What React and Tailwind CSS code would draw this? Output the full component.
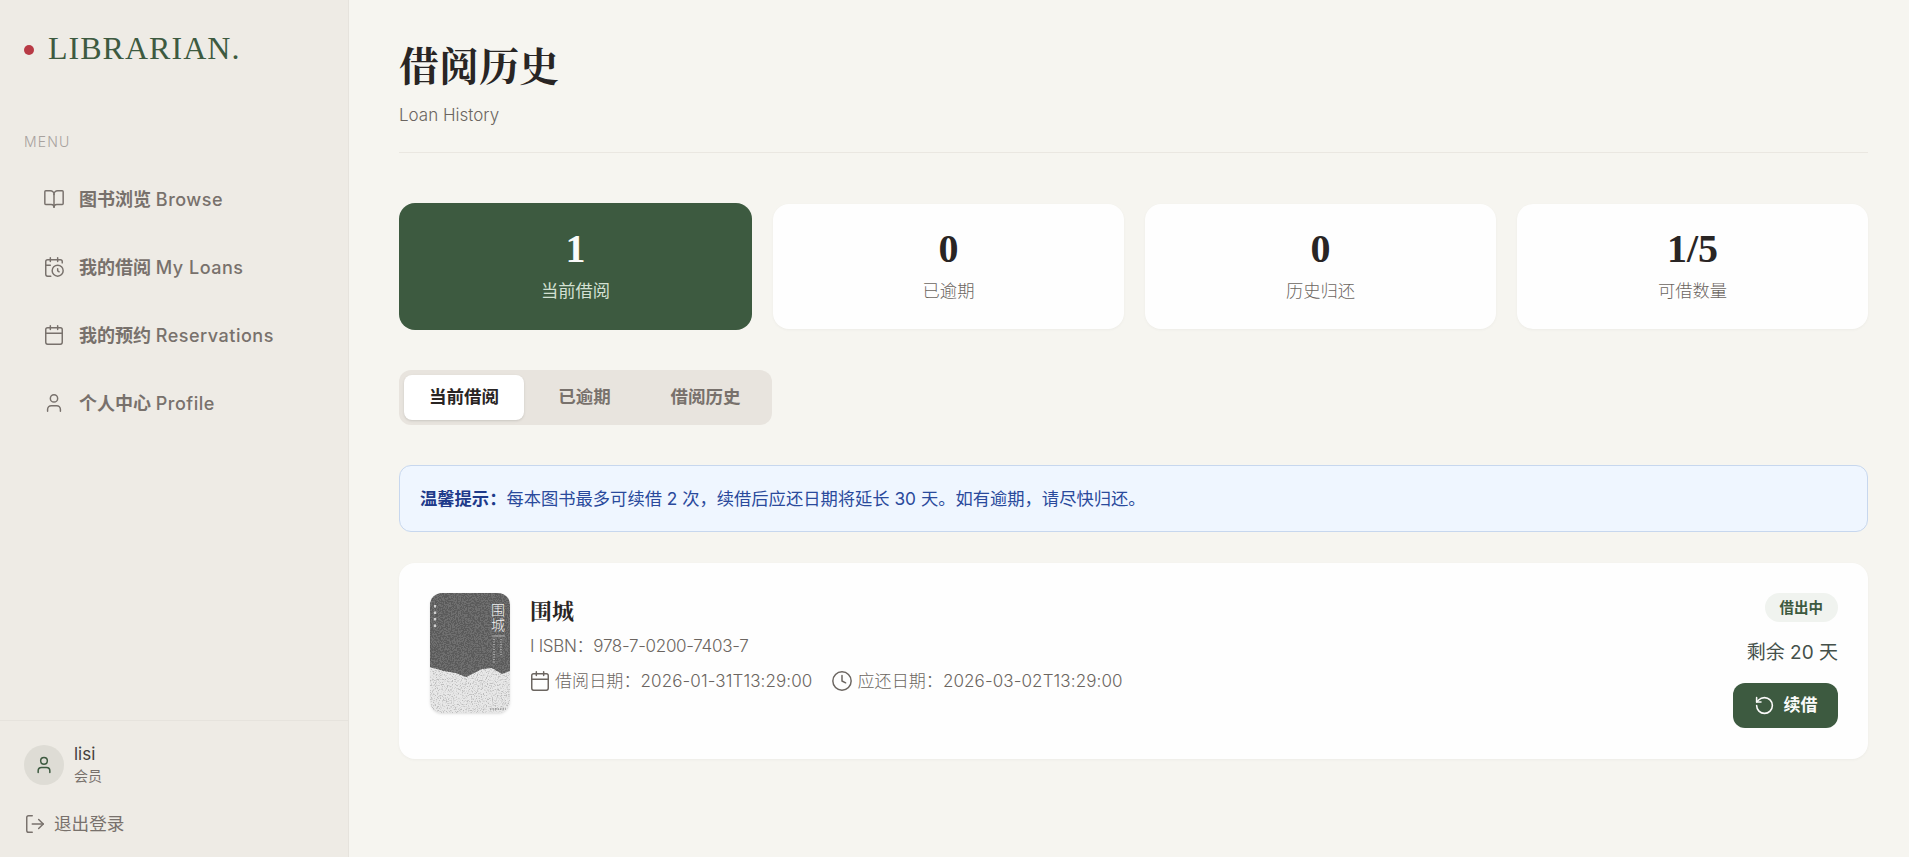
import { BookOpen, CalendarClock, Calendar, User, LogOut, Clock, RotateCcw } from 'lucide-react'

const sans = "font-['Inter','Noto_Sans_CJK_SC',sans-serif]"
const serif = "font-['Liberation_Serif','Noto_Serif_CJK_SC','Noto_Sans_CJK_SC',serif]"

const navItems = [
  { icon: BookOpen, zh: '图书浏览', en: 'Browse' },
  { icon: CalendarClock, zh: '我的借阅', en: 'My Loans' },
  { icon: Calendar, zh: '我的预约', en: 'Reservations' },
  { icon: User, zh: '个人中心', en: 'Profile' },
]

const stats = [
  { value: '0', label: '已逾期' },
  { value: '0', label: '历史归还' },
  { value: '1/5', label: '可借数量' },
]

function BookCover() {
  return (
    <svg width="80" height="120" viewBox="0 0 80 120" className="rounded-xl shadow-sm shrink-0">
      <defs>
        <filter id="grainDark" x="0" y="0" width="100%" height="100%">
          <feTurbulence type="fractalNoise" baseFrequency="0.7" numOctaves="3" seed="4" />
          <feColorMatrix values="0 0 0 0 0.1  0 0 0 0 0.1  0 0 0 0 0.1  7 0 0 0 -3" />
          <feComposite in2="SourceGraphic" operator="in" />
          <feMerge>
            <feMergeNode in="SourceGraphic" />
            <feMergeNode />
          </feMerge>
        </filter>
        <filter id="grainLight" x="0" y="0" width="100%" height="100%">
          <feTurbulence type="fractalNoise" baseFrequency="0.8" numOctaves="2" seed="9" />
          <feColorMatrix values="0 0 0 0 0.5  0 0 0 0 0.5  0 0 0 0 0.5  4 0 0 0 -1.9" />
          <feComposite in2="SourceGraphic" operator="in" />
          <feMerge>
            <feMergeNode in="SourceGraphic" />
            <feMergeNode />
          </feMerge>
        </filter>
      </defs>
      <rect width="80" height="120" fill="#e8e8e8" filter="url(#grainLight)" />
      <path
        d="M0 0H80V78L72 81L62 75L52 76L44 80L36 84L26 80L14 78L0 74Z"
        fill="#707070"
        filter="url(#grainDark)"
      />
      <text x="68" y="22" fontSize="14" fill="#f2f2f2" textAnchor="middle" fontFamily="'Noto Sans CJK SC', sans-serif" fontWeight="300">围</text>
      <text x="68" y="37" fontSize="14" fill="#f2f2f2" textAnchor="middle" fontFamily="'Noto Sans CJK SC', sans-serif" fontWeight="300">城</text>
      <path d="M62 43H75" stroke="#e8e8e8" strokeWidth="0.6" />
      <path d="M64 46V70M71 46V62" stroke="#c8c8c8" strokeWidth="1.2" strokeDasharray="1 1.5" />
      <path d="M5 12V36" stroke="#d0d0d0" strokeWidth="2.2" strokeDasharray="2.5 4" />
      <path d="M60 116H76" stroke="#777777" strokeWidth="1" strokeDasharray="1.5 1" />
    </svg>
  )
}

function Sidebar() {
  return (
    <aside className="w-[349px] shrink-0 flex flex-col bg-[#eeebe5] border-r border-[#e6e3dd]">
      <div className="flex items-center pl-6 h-[96px]">
        <span className="w-[10px] h-[10px] rounded-full bg-[#b83a45] mt-1 mr-[14px]" />
        <span className={`${serif} text-[32px] leading-none tracking-[0.032em] text-[#3d5a40]`}>LIBRARIAN.</span>
      </div>

      <div className={`${sans} pl-6 mt-[36px] text-[14px] leading-5 tracking-[0.08em] font-light text-[#a8a29e]`}>MENU</div>

      <nav className="mt-[13px] flex flex-col">
        {navItems.map(({ icon: Icon, zh, en }) => (
          <a key={en} className={`${sans} h-[68px] pl-[43px] flex items-center gap-[14px] text-[18px] font-medium text-[#78716c]`}>
            <Icon size={22} strokeWidth={1.6} className="shrink-0" />
            <span className="whitespace-nowrap">
              <span className="font-semibold">{zh}</span> <span className="tracking-[0.5px]">{en}</span>
            </span>
          </a>
        ))}
      </nav>

      <div className="mt-auto border-t border-[#e6e3dd] h-[137px] px-6 pt-[22px]">
        <div className="flex items-center gap-[10px]">
          <div className="w-10 h-10 rounded-full bg-[#dedcd5] flex items-center justify-center text-[#3d5a40]">
            <User size={20} strokeWidth={1.8} />
          </div>
          <div className={sans}>
            <div className="text-[17px] leading-[23px] text-[#44403c]">lisi</div>
            <div className="text-[14px] leading-[20px] text-[#78716c]">会员</div>
          </div>
        </div>
        <button className={`${sans} mt-[26px] flex items-center gap-[8px] text-[17.6px] leading-6 text-[#78716c]`}>
          <LogOut size={22} strokeWidth={1.6} />
          退出登录
        </button>
      </div>
    </aside>
  )
}

export default function App() {
  return (
    <div className="flex h-screen bg-[#f6f5f0] overflow-hidden">
      <Sidebar />

      <main className={`${sans} flex-1 min-w-0 pl-[50px] pr-[41px]`}>
        {/* Header */}
        <div className="pt-[41px] h-[153px] border-b border-[#eae7e1]">
          <h1 className={`${serif} text-[40px] leading-[54px] font-bold text-[#292524]`}>借阅历史</h1>
          <p className="mt-[8px] text-[17px] leading-6 font-light text-[#6b6560]">Loan History</p>
        </div>

        {/* Stats */}
        <div className="mt-[51px] grid grid-cols-[353px_1fr_1fr_1fr] gap-[21px]">
          <div className="h-[127px] -my-px pb-[5px] rounded-2xl bg-[#3d5a40] flex flex-col items-center justify-center">
            <div className={`${serif} text-[40px] leading-[48px] font-bold text-[#fafaf9]`}>1</div>
            <div className="mt-[6px] text-[17.3px] leading-6 text-[#d3e0d3]">当前借阅</div>
          </div>
          {stats.map((s) => (
            <div key={s.label} className="h-[125px] pb-[5px] rounded-2xl bg-[#fefefe] shadow-[0_1px_3px_rgba(0,0,0,0.04)] flex flex-col items-center justify-center">
              <div className={`${serif} text-[40px] leading-[48px] font-bold text-[#292524]`}>{s.value}</div>
              <div className="mt-[6px] text-[17.3px] leading-6 font-light text-[#6b6560]">{s.label}</div>
            </div>
          ))}
        </div>

        {/* Tabs */}
        <div className="mt-[41px] w-[373px] h-[55px] p-[5px] rounded-xl bg-[#e8e4de] flex text-[17.5px] font-semibold">
          <button className="w-[120px] rounded-lg bg-white shadow-sm text-[#292524]">当前借阅</button>
          <button className="w-[121px] text-[#78716c]">已逾期</button>
          <button className="w-[121px] text-[#78716c]">借阅历史</button>
        </div>

        {/* Notice */}
        <p className="mt-[40px] h-[67px] px-[20px] rounded-xl bg-[#eff6ff] border border-[#c7d7ee] flex items-center text-[17.3px] text-[#2a4a9c]">
          <span><b className="font-bold text-[#1e3a8a]">温馨提示：</b>每本图书最多可续借 2 次，续借后应还日期将延长 30 天。如有逾期，请尽快归还。</span>
        </p>

        {/* Loan card */}
        <div className="mt-[31px] h-[196px] rounded-2xl bg-[#fefefe] shadow-[0_1px_3px_rgba(0,0,0,0.04)] pl-[31px] pr-[30px] pt-[30px] flex">
          <BookCover />
          <div className="ml-5 flex-1 min-w-0">
            <h3 className={`${serif} mt-[4px] text-[22px] leading-[30px] font-bold text-[#292524]`}>围城</h3>
            <p className="mt-[7px] text-[17px] leading-6 font-light tracking-[-0.3px] text-[#6b6560]">I ISBN：978-7-0200-7403-7</p>
            <div className="mt-[11px] -ml-[1px] flex items-center text-[17px] leading-6 font-light tracking-[0.1px] text-[#6b6560]">
              <Calendar size={22} strokeWidth={1.6} />
              <span className="ml-[4px]">借阅日期：2026-01-31T13:29:00</span>
              <Clock size={22} strokeWidth={1.6} className="ml-[19px]" />
              <span className="ml-[4px]">应还日期：2026-03-02T13:29:00</span>
            </div>
          </div>
          <div className="flex flex-col items-end">
            <span className="h-[29px] px-[15px] rounded-full bg-[#f0f3ef] flex items-center text-[14.5px] font-semibold text-[#3d5a40]">借出中</span>
            <div className="mt-[17px] text-[19px] leading-[28px] text-[#44504a]">剩余 20 天</div>
            <button className="mt-[16px] w-[105px] h-[45px] rounded-xl bg-[#3d5a40] flex items-center justify-center gap-[9px] text-[17px] font-semibold text-[#fafaf9]">
              <RotateCcw size={21} strokeWidth={1.8} />
              续借
            </button>
          </div>
        </div>
      </main>
    </div>
  )
}
